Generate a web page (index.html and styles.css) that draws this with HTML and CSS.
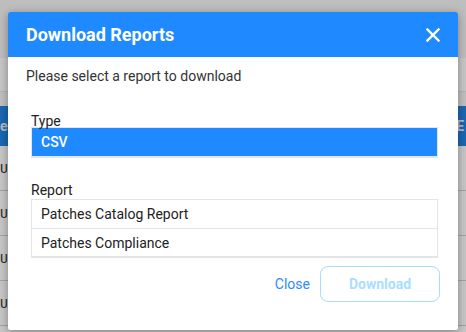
FILE: index.html
```html
<!DOCTYPE html>
<html>
<head>
<meta charset="utf-8">
<link rel="stylesheet" href="styles.css">
</head>
<body>
<div class="page">
  <div class="topbar"></div>
  <div class="subbar"></div>
  <div class="gap"></div>
  <div class="thead"><span class="th-left">er</span><span class="th-right">E</span></div>
  <div class="row"><span>UX</span></div>
  <div class="row"><span>UX</span></div>
  <div class="row"><span>UX</span></div>
  <div class="row last"><span>UX</span></div>
</div>
<div class="overlay"></div>
<div class="modal">
  <div class="modal-header">
    <h1 class="modal-title">Download Reports</h1>
    <svg class="close-icon" width="14" height="14" viewBox="0 0 14 14"><path d="M1.5 1.5 L12.5 12.5 M12.5 1.5 L1.5 12.5" stroke="#fff" stroke-width="2.4" stroke-linecap="square"/></svg>
  </div>
  <div class="modal-body">
    <p class="intro">Please select a report to download</p>
    <div class="field type">
      <div class="label">Type</div>
      <div class="listbox">
        <div class="option selected">CSV</div>
      </div>
    </div>
    <div class="field report">
      <div class="label">Report</div>
      <div class="listbox report-list">
        <div class="option">Patches Catalog Report</div>
        <div class="option">Patches Compliance</div>
      </div>
    </div>
    <div class="actions">
      <span class="btn-close">Close</span>
      <span class="btn-download">Download</span>
    </div>
  </div>
</div>
</body>
</html>
```
FILE: styles.css
```css
* { box-sizing: border-box; }
html, body { margin: 0; padding: 0; }
body {
  width: 466px;
  height: 332px;
  overflow: hidden;
  font-family: Roboto, "Liberation Sans", sans-serif;
  background: #fff;
  position: relative;
}
.page { display: flex; flex-direction: column; }
.topbar { height: 58px; background: #f4f4f4; }
.subbar { height: 34px; background: #ffffff; border-bottom: 1px solid #e8e8e8; }
.gap { height: 14px; background: #f7f7f7; }
.thead {
  height: 40px;
  background: #2384e6;
  display: flex;
  justify-content: space-between;
  align-items: center;
  color: #e8eef5;
  font-size: 14px;
  font-weight: 700;
}
.th-left { margin-left: 0; }
.th-right { margin-right: 2px; }
.row {
  height: 45px;
  border-bottom: 1px solid #d0d0d0;
  display: flex;
  align-items: center;
  font-size: 13px;
  color: #333;
  font-family: "DejaVu Sans Mono", monospace;
}
.row span { margin-left: 0; }
.overlay {
  position: absolute;
  inset: 0;
  background: rgba(0,0,0,0.22);
}
.modal {
  position: absolute;
  left: 8px;
  top: 12px;
  width: 450px;
  height: 318px;
  background: #fff;
  border-radius: 2px;
  box-shadow: 0 2px 10px rgba(0,0,0,0.35);
  overflow: hidden;
}
.modal-header {
  height: 45px;
  background: #1f8aff;
  display: flex;
  align-items: center;
  justify-content: space-between;
  padding: 0 18px 0 18px;
}
.modal-title {
  margin: 0;
  font-size: 18px;
  font-weight: 700;
  color: #fff;
}
.close-icon { display: block; }
.modal-body { padding: 0 18px 0 18px; }
.intro {
  margin: 10px 0 0 0;
  font-size: 14px;
  line-height: 18px;
  color: #333;
}
.field { margin: 28px 2px 0 5px; }
.field.report { margin-top: 24px; }
.label {
  font-size: 14px;
  line-height: 16px;
  color: #222;
}
.field.type .label { margin-bottom: -2px; }
.field.report .label { margin-bottom: 1px; }
.listbox {
  border: 1px solid #e2e4e6;
  border-bottom-width: 2px;
}
.option {
  height: 28px;
  padding-left: 9px;
  display: flex;
  align-items: center;
  font-size: 14px;
  color: #222;
}
.option.selected {
  background: #1f8aff;
  color: #fff;
  font-weight: 500;
}
.report-list .option + .option { border-top: 1px solid #e2e4e6; }
.actions {
  display: flex;
  justify-content: flex-end;
  align-items: center;
  gap: 10px;
  margin-top: 8px;
}
.btn-close {
  font-size: 14px;
  color: #2d8cff;
}
.btn-download {
  width: 120px;
  height: 36px;
  border: 1px solid #a6dcff;
  border-radius: 8px;
  display: flex;
  align-items: center;
  justify-content: center;
  font-size: 14px;
  font-weight: 700;
  color: #aadeff;
}
```
